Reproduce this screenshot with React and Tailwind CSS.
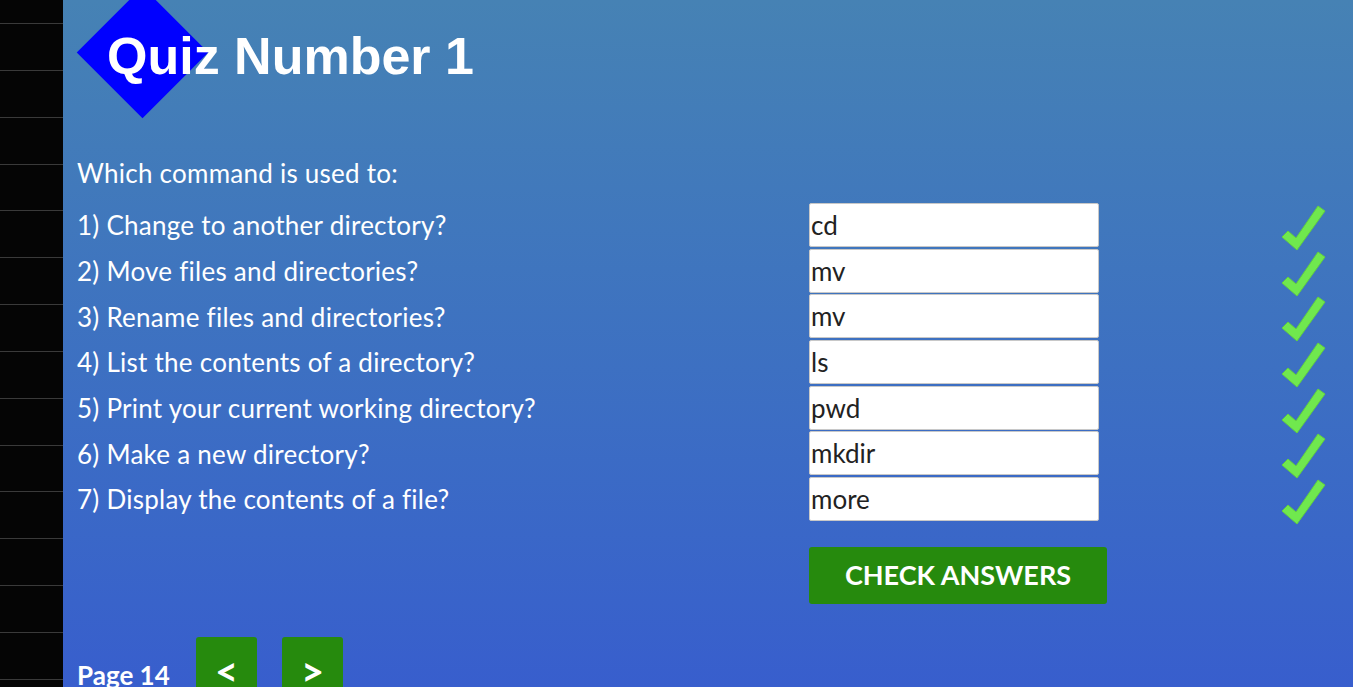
import React from "react";

const questions = [
  ["1) Change to another directory?", "cd"],
  ["2) Move files and directories?", "mv"],
  ["3) Rename files and directories?", "mv"],
  ["4) List the contents of a directory?", "ls"],
  ["5) Print your current working directory?", "pwd"],
  ["6) Make a new directory?", "mkdir"],
  ["7) Display the contents of a file?", "more"],
];

function Check() {
  return (
    <svg width="45" height="46" viewBox="0 0 45 46">
      <polygon
        points="1,32 7,26 15,33 37,1 44,6 16,45"
        fill="#70e84e"
        stroke="#62cf40"
        strokeWidth="1"
        strokeLinejoin="round"
      />
    </svg>
  );
}

export default function App() {
  return (
    <div className="flex h-[687px] w-[1353px] overflow-hidden" style={{ fontFamily: "Lato, 'Open Sans', sans-serif" }}>
      <div className="w-[63px] shrink-0 bg-[#050505] flex flex-col">
        <div className="h-[24px] shrink-0 border-b border-[#3a3a3a]" />
        {Array.from({ length: 14 }).map((_, i) => (
          <div key={i} className="h-[46.85px] shrink-0 border-b border-[#3a3a3a]" />
        ))}
      </div>
      <div className="flex-1 bg-gradient-to-b from-[#4682b4] to-[#385ecd] pl-[14px] flex flex-col">
        <div className="relative h-[150px] shrink-0">
          <div className="absolute left-[19px] top-[6px] w-[93px] h-[93px] bg-[#0000ff] rotate-45" />
          <h1
            className="absolute left-[30px] top-[24px] text-[52px] font-bold text-white leading-[64px]"
            style={{ fontFamily: "'Liberation Sans', Arial, sans-serif" }}
          >
            Quiz Number 1
          </h1>
        </div>
        <p className="text-white text-[26px] tracking-[0.25px] leading-[40px] mt-[3px]">Which command is used to:</p>
        <div className="flex flex-col mt-[9px]">
          {questions.map(([q, a], i) => (
            <div key={i} className="flex items-center h-[45.7px]">
              <div className="w-[732px] text-white text-[26px] tracking-[0.25px] pt-[2px]">{q}</div>
              <input
                readOnly
                value={a}
                className="w-[290px] h-[44px] bg-white border border-[#c8c8c8] rounded-[2px] text-[26px] text-[#222] px-[1px] outline-none"
                style={{ fontFamily: "Lato, sans-serif" }}
              />
              <div className="ml-[182px] mt-[6px]">
                <Check />
              </div>
            </div>
          ))}
        </div>
        <div className="pl-[732px] mt-[25px]">
          <button className="w-[298px] h-[57px] bg-[#268a0d] rounded-[3px] text-white font-bold text-[27px]">
            CHECK ANSWERS
          </button>
        </div>
        <div className="flex items-start mt-[33px]">
          <span className="text-white font-bold text-[26px] mt-[18px] w-[119px] leading-[40px]">Page 14</span>
          <button className="w-[61px] h-[68px] bg-[#268a0d] rounded-[3px] text-white font-bold text-[40px] leading-none">&lt;</button>
          <button className="w-[61px] h-[68px] bg-[#268a0d] rounded-[3px] text-white font-bold text-[40px] leading-none ml-[25px]">&gt;</button>
        </div>
      </div>
    </div>
  );
}
